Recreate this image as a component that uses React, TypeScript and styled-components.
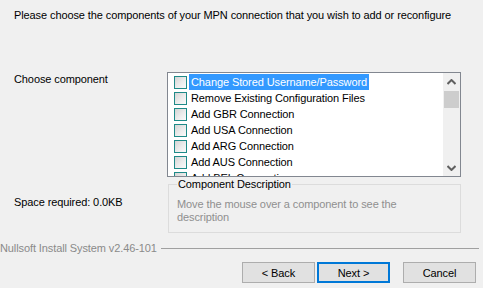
import styled, {createGlobalStyle} from "styled-components";

const GlobalStyle = createGlobalStyle`
  html, body {
    margin: 0;
    padding: 0;
    background: #f0f0f0;
  }
  body {
    font-family: "Liberation Sans", Arial, sans-serif;
    font-size: 11px;
    letter-spacing: -0.1px;
    color: #000;
  }
`

const items = [
    'Change Stored Username/Password',
    'Remove Existing Configuration Files',
    'Add GBR Connection',
    'Add USA Connection',
    'Add ARG Connection',
    'Add AUS Connection',
    'Add BEL Connection',
    'Add BRA Connection',
]

export default function App() {
    return (
        <>
            <GlobalStyle/>
            <Window>
                <Header>Please choose the components of your MPN connection that you wish to add or reconfigure</Header>
                <Main>
                    <Label>Choose component</Label>
                    <Tree>
                        <TreeList>
                            {items.map((name, i) => (
                                <TreeRow key={name}>
                                    <Check/>
                                    <ItemText selected={i === 0}>{name}</ItemText>
                                </TreeRow>
                            ))}
                        </TreeList>
                        <ScrollBar>
                            <ScrollBtn>
                                <svg width="9" height="6" viewBox="0 0 9 6">
                                    <path d="M0.5 5 L4.5 1 L8.5 5" fill="none" stroke="#606060" strokeWidth="2"/>
                                </svg>
                            </ScrollBtn>
                            <Track>
                                <Thumb/>
                            </Track>
                            <ScrollBtn>
                                <svg width="9" height="6" viewBox="0 0 9 6">
                                    <path d="M0.5 1 L4.5 5 L8.5 1" fill="none" stroke="#606060" strokeWidth="2"/>
                                </svg>
                            </ScrollBtn>
                        </ScrollBar>
                    </Tree>
                    <SpaceLabel>Space required: 0.0KB</SpaceLabel>
                    <Group>
                        <legend>Component Description</legend>
                        <Description>Move the mouse over a component to see the description</Description>
                    </Group>
                </Main>
                <Brand>
                    <span>Nullsoft Install System v2.46-101</span>
                    <Rule/>
                </Brand>
                <Buttons>
                    <Button>&lt; Back</Button>
                    <Button primary>Next &gt;</Button>
                    <Button gapLeft>Cancel</Button>
                </Buttons>
            </Window>
        </>
    )
}

const Window = styled.div`
  width: 483px;
  height: 288px;
  display: flex;
  flex-direction: column;
  overflow: hidden;
`

const Header = styled.div`
  height: 72px;
  box-sizing: border-box;
  padding: 9px 14px 0 14px;
  line-height: 13px;
`

const Main = styled.div`
  display: grid;
  grid-template-columns: 153px 294px;
  grid-template-rows: 105px 56px;
  padding-left: 14px;
`

const Label = styled.div`
  line-height: 14px;
`

const SpaceLabel = styled.div`
  line-height: 14px;
  padding-top: 18px;
`

const Tree = styled.div`
  border: 1px solid #828790;
  background: #fff;
  display: flex;
  overflow: hidden;
`

const TreeList = styled.ul`
  list-style: none;
  margin: 0;
  padding: 1px 0 0 6px;
  flex: 1;
  overflow: hidden;
`

const TreeRow = styled.li`
  height: 16px;
  display: flex;
  align-items: center;
`

const Check = styled.span`
  width: 13px;
  height: 13px;
  box-sizing: border-box;
  border: 1px solid #1f8a88;
  background: linear-gradient(135deg, #d4d4d4 0%, #ececec 55%, #fbfbfb 100%);
  flex-shrink: 0;
`

const ItemText = styled.span<{selected?: boolean}>`
  margin-left: 2px;
  padding: 0 2px;
  height: 16px;
  line-height: 16px;
  white-space: nowrap;
  background: ${p => p.selected ? '#3399ff' : 'transparent'};
  color: ${p => p.selected ? '#fff' : '#000'};
`

const ScrollBar = styled.div`
  width: 17px;
  background: #f0f0f0;
  display: flex;
  flex-direction: column;
`

const ScrollBtn = styled.div`
  height: 17px;
  display: flex;
  align-items: center;
  justify-content: center;
`

const Track = styled.div`
  flex: 1;
  padding-top: 1px;
`

const Thumb = styled.div`
  height: 17px;
  margin: 0 1px;
  background: #cdcdcd;
`

const Group = styled.fieldset`
  margin: 0 0 0 1px;
  padding: 0 8px;
  border: 1px solid #dcdcdc;
  min-width: 0;
  legend {
    padding: 0 1px;
    line-height: 15px;
    color: #000;
  }
`

const Description = styled.div`
  color: #8f8f8f;
  line-height: 13px;
  padding-top: 6px;
  width: 270px;
`

const Brand = styled.div`
  display: flex;
  align-items: center;
  margin-top: 8px;
  height: 14px;
  color: #8a8a8a;
  span {
    white-space: nowrap;
  }
`

const Rule = styled.div`
  flex: 1;
  height: 1px;
  margin: 1px 4px 0 4px;
  background: #a0a0a0;
`

const Buttons = styled.div`
  display: flex;
  justify-content: flex-end;
  gap: 2px;
  margin-top: 7px;
  padding-right: 7px;
`

const Button = styled.button<{primary?: boolean, gapLeft?: boolean}>`
  width: 73px;
  height: 21px;
  box-sizing: border-box;
  margin-left: ${p => p.gapLeft ? '11px' : '0'};
  font-family: "Liberation Sans", Arial, sans-serif;
  font-size: 11px;
  letter-spacing: -0.1px;
  color: #000;
  background: #e1e1e1;
  border: ${p => p.primary ? '2px solid #0078d7' : '1px solid #adadad'};
  padding: 0;
`
